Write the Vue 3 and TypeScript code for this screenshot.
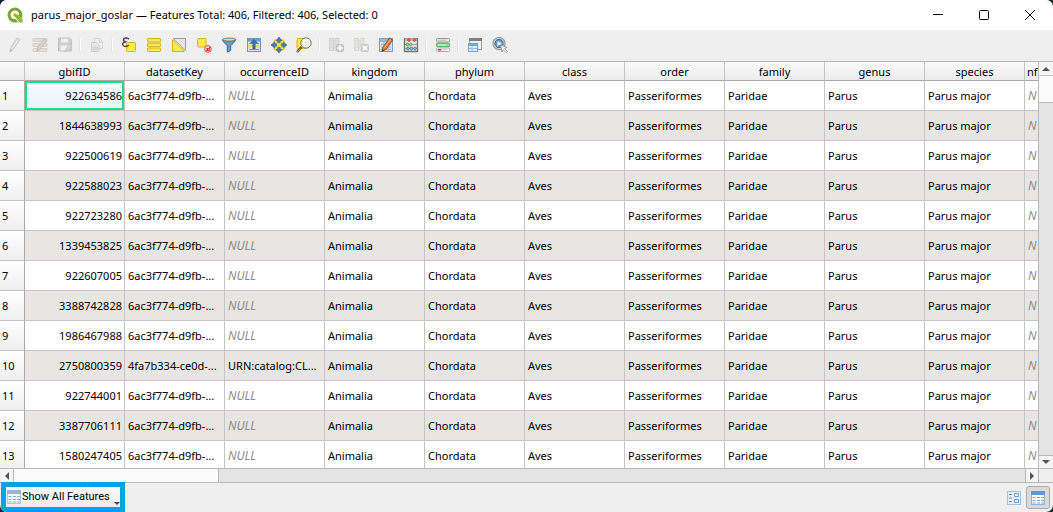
<script setup lang="ts">
import { ref } from 'vue'

interface Tool {
  name: string
  art: string
  disabled?: boolean
}

const yellow = 'fill="#fce94f" stroke="#d3b50e"'
const blue = 'fill="#6d97c4" stroke="#3f6a94"'

const groups: Tool[][] = [
  [
    {
      name: 'Toggle editing mode', disabled: true,
      art: '<path d="M3 15l1-4.500L10 1l3 1.500L6.500 12z" fill="#dddcd6" stroke="#c9c8c2"/><path d="M3 15l.6-2.500 1.500 1z" fill="#aaa"/><path d="M5.500 11L11 2.500" stroke="#f1f1ec"/>',
    },
    {
      name: 'Toggle multi edit mode', disabled: true,
      art: '<path d="M1 1.500h14v3H1zM1 6.500h14v3H1zM1 11.500h14v3H1z" fill="#e0dfd9" stroke="#d3d2cb"/><path d="M5 14l1-4 6-8 2.500 1.500L8 12z" fill="#d8d7d1" stroke="#bdbcb6"/>',
    },
    {
      name: 'Save edits', disabled: true,
      art: '<path d="M1.500 1h11l2 2v11h-13z" fill="#cfcfcc" stroke="#c0c0bd"/><path d="M4 1.500h7v4H4z" fill="#eee"/><path d="M3.500 8.500h8.500v5H3.500z" fill="#f0f0ee"/><path d="M8 15l1-3 4-5 2 1.500-4 5z" fill="#dddcd6" stroke="#c2c2bc"/>',
    },
  ],
  [
    {
      name: 'Copy rows', disabled: true,
      art: '<path d="M5.500 1.500h5l3 3v7h-8z" fill="#f0f0ee" stroke="#d0d0cd"/><path d="M2.500 5.500h5l2.500 2.500v6.500H2.500z" fill="#e8e8e5" stroke="#cececa"/><path d="M4 10h4.500v3H4zM10 3v2.500h3" fill="#d9d9d6" stroke="#cececa" stroke-width=".6"/>',
    },
  ],
  [
    {
      name: 'Select by expression',
      art: `<rect x="5.500" y="5.500" width="9" height="9" rx="1" ${yellow}/><path d="M8 2.200C6.500.2 2.300.8 2.500 3c.1 1.200 1.300 1.800 3 1.700C3 4.800 1.500 5.800 1.700 7.500 2.100 10 6 9.900 7.800 8" fill="none" stroke="#62376f" stroke-width="1.500"/>`,
    },
    {
      name: 'Select all',
      art: `<g ${yellow}><rect x="1.500" y="1.500" width="13" height="3.500" rx=".6"/><rect x="1.500" y="6.200" width="13" height="3.500" rx=".6"/><rect x="1.500" y="11" width="13" height="3.500" rx=".6"/></g>`,
    },
    {
      name: 'Invert selection',
      art: `<path d="M2.500 1.500h12v12z" fill="#e6e6e6" stroke="#9c9c9c"/><path d="M1.500 2.500v12h12z" ${yellow}/><path d="M1 1l14 14" stroke="#fff"/>`,
    },
    {
      name: 'Deselect all',
      art: `<rect x="1.500" y="1.500" width="8.500" height="8.500" rx="1" ${yellow}/><circle cx="12" cy="12" r="3.400" fill="#fbe3e3" stroke="#e05357"/><path d="M9.700 14.300l4.600-4.600M10.300 11.500h3.400v2h-3" stroke="#d9262b"/>`,
    },
    {
      name: 'Filter by form',
      art: `<path d="M1.500 2.500c0 2 3.500 5 4.800 6V15l3.400-1.500v-5c1.300-1 4.800-4 4.800-6z" ${blue}/><ellipse cx="8" cy="2.600" rx="6.500" ry="1.500" fill="#f4de6a" stroke="#4d7195" stroke-width=".9"/>`,
    },
    {
      name: 'Move selection to top',
      art: '<rect x="1.500" y="1.500" width="13" height="13" fill="#d7e5f2" stroke="#7096bd"/><path d="M2 2h12v2.500H2z" fill="#6f9bc8"/><path d="M2 8h12v2H2z" fill="#f0dc62"/><path d="M3 6.500h10M3 12.500h10" stroke="#739cc7"/><path d="M8 2.500l3.500 3.500H9.200v6H6.800V6H4.500z" fill="#416f9e" stroke="#345d87" stroke-width=".6"/>',
    },
    {
      name: 'Pan map to the selected rows',
      art: `<rect x="3" y="3" width="10" height="10" rx="1" ${yellow}/><path d="M8 0l3 3.700H9.200v2H6.800v-2H5zM8 16l3-3.700H9.200v-2H6.800v2H5zM0 8l3.700-3v1.800h2v2.400h-2V11zM16 8l-3.700-3v1.800h-2v2.400h2V11z" fill="#4e7eae" stroke="#315a84" stroke-width=".6"/>`,
    },
    {
      name: 'Zoom map to the selected rows',
      art: `<rect x="1" y="1.500" width="9" height="10" rx="1" ${yellow}/><path d="M1 15l4.500-5" stroke="#594c31" stroke-width="2.500"/><path d="M1.200 14.800l3-3.300" stroke="#e0b43d"/><circle cx="10" cy="6" r="5.200" fill="#eeeeea" fill-opacity=".95" stroke="#777"/><path d="M6.800 5.500Q8 2.500 11 2.800" fill="none" stroke="#fff" stroke-width="1.400"/>`,
    },
  ],
  [
    {
      name: 'New field', disabled: true,
      art: '<path d="M1.500 1.500h4v12h-4zM7 1.500h4v12H7z" fill="#e2e2dc" stroke="#d3d3cd"/><path d="M2 4h8.500M2 7h8.500M2 10h8.500" stroke="#d6d6d0"/><rect x="8.500" y="7.500" width="7" height="7" rx="1" fill="#cfcfc9" stroke="#c4c4be"/><path d="M12 8.500v5M9.500 11h5" stroke="#fff" stroke-width="1.500"/>',
    },
    {
      name: 'Delete field', disabled: true,
      art: '<path d="M1.500 1.500h4v12h-4zM7 1.500h4v12H7z" fill="#e6e6e4" stroke="#d6d6d3"/><path d="M2 4h8.500M2 7h8.500M2 10h8.500" stroke="#dadad7"/><rect x="8.500" y="7.500" width="7" height="7" rx="1" fill="#d6d2d2" stroke="#ccc8c8"/><path d="M10 9l4 4m0-4l-4 4" stroke="#fff" stroke-width="1.300"/>',
    },
    {
      name: 'Organize columns',
      art: '<rect x="1.500" y="1.500" width="13" height="13" fill="#d3e4f5" stroke="#78a0cb"/><path d="M2 2h12v3H2z" fill="#93b8df"/><path d="M3 7.500h10M3 10h10M3 12.500h10M6 5v9M10 5v9" stroke="#8eb2d7" stroke-width=".9"/><path d="M4 14.500l.8-4.200L11.500 1l3.200 2.100L8 12.400z" fill="#e07936" stroke="#8e431a" stroke-width=".8"/><path d="M6 11L12.800 2.300" stroke="#f7b276"/><path d="M4 14.500l.4-2.300 1.700 1.200z" fill="#423325"/>',
    },
    {
      name: 'Open field calculator',
      art: '<rect x="1.500" y="1.500" width="13" height="13" fill="#e5e5e2" stroke="#a5a59f"/><path d="M2 3h12M2 7.500h12M2 11.500h12" stroke="#999"/><g stroke-width=".7"><g fill="#f47a7a" stroke="#cf2b2b"><circle cx="6" cy="3" r="1.400"/><circle cx="11.500" cy="3" r="1.400"/></g><g fill="#8ed592" stroke="#46a04b"><circle cx="4.500" cy="7.500" r="1.400"/><circle cx="7.500" cy="7.500" r="1.400"/></g><g fill="#86b3dc" stroke="#42759f"><circle cx="5" cy="11.500" r="1.400"/><circle cx="8.500" cy="11.500" r="1.400"/><circle cx="12" cy="11.500" r="1.400"/></g></g><path d="M1.500 1v14M14.500 1v14M1 14.500h14" stroke="#77776f" stroke-width="1.300"/>',
    },
  ],
  [
    {
      name: 'Conditional formatting',
      art: '<rect x="1.500" y="1.500" width="13" height="3.500" rx="1" fill="#e9e9e9" stroke="#999"/><rect x="1.500" y="6.200" width="13" height="3.500" rx="1" fill="#8be29b" stroke="#50a65e"/><rect x="1.500" y="11" width="13" height="3.500" rx="1" fill="#fff" stroke="#aaa"/><path d="M3 3.200h8" stroke="#bbb"/><path d="M3 8h8" stroke="#d6f8da"/><path d="M3 12.800h3" stroke="#cc2432" stroke-width="1.500"/><path d="M6 12.800h6" stroke="#f0a3a8"/>',
    },
  ],
  [
    {
      name: 'Dock attribute table',
      art: '<rect x="2.500" y="1.500" width="12" height="11" fill="#eee" stroke="#a1a1a1"/><path d="M2 1h13v3H2z" fill="#808080"/><rect x="1.500" y="6.500" width="9" height="8" fill="#e1edfa" stroke="#7ba2cc"/><path d="M2 7h8v2H2z" fill="#76a3d3"/><path d="M2 11.500h8M5 9v5" stroke="#98bbdf"/>',
    },
    {
      name: 'Actions',
      art: '<circle cx="7" cy="6.500" r="6" fill="#e8ebee" stroke="#8f989f" stroke-width="1.200"/><circle cx="7" cy="6.500" r="4.200" fill="#6b98c4" stroke="#346491"/><path d="M5.500 4v5L10 6.500z" fill="#fff"/><path d="M8.500 8l6.500 2.500-2.500 1 3 3-1.200 1.200-3-3-1.200 2.300z" fill="#fff" stroke="#888" stroke-width=".8"/>',
    },
  ],
]

const columns = ['gbifID', 'datasetKey', 'occurrenceID', 'kingdom', 'phylum', 'class', 'order', 'family', 'genus', 'species']
const taxonomy = ['Animalia', 'Chordata', 'Aves', 'Passeriformes', 'Paridae', 'Parus', 'Parus major']

const ids = [
  '922634586', '1844638993', '922500619', '922588023', '922723280', '1339453825', '922607005',
  '3388742828', '1986467988', '2750800359', '922744001', '3387706111', '1580247405',
]
const rows = ids.map((id) => {
  const catalogued = id === '2750800359'
  return {
    id,
    cells: [
      catalogued ? '4fa7b334-ce0d-...' : '6ac3f774-d9fb-...',
      catalogued ? 'URN:catalog:CL...' : 'NULL',
      ...taxonomy,
      'N',
    ],
  }
})

const current = ref('922634586')
const view = ref<'form' | 'table'>('table')
</script>

<template>
  <div class="window">
    <header class="titlebar">
      <svg class="logo" viewBox="0 0 16 16" aria-hidden="true">
        <path d="M8 .5a7.500 7.500 0 1 0 3 14.400L8.700 12A4.300 4.300 0 1 1 12 8.800l2.600 2.500A7.500 7.500 0 0 0 8 .5z" fill="#76a832" />
        <path d="M9 8h2.700l4 4.500v3h-3.200L9 11z" fill="#8dbb3c" />
        <path d="M6.500 6.500h2.500L10.800 8.500 8.500 10.500 6.500 8.700z" fill="#ee8a2e" />
      </svg>
      <h1>parus_major_goslar — Features Total: 406, Filtered: 406, Selected: 0</h1>
      <div class="controls">
        <button type="button" aria-label="Minimize"><svg viewBox="0 0 12 12"><path d="M1 5.500h10" /></svg></button>
        <button type="button" aria-label="Maximize"><svg viewBox="0 0 12 12"><rect x="1.500" y="1.500" width="9" height="9" rx="1" /></svg></button>
        <button type="button" aria-label="Close"><svg viewBox="0 0 12 12"><path d="M1 1l10 10M11 1L1 11" /></svg></button>
      </div>
    </header>

    <div class="toolbar" role="toolbar" aria-label="Attribute table">
      <div v-for="(group, g) in groups" :key="g" class="group">
        <button v-for="tool in group" :key="tool.name" type="button" :aria-label="tool.name" :disabled="tool.disabled">
          <svg viewBox="0 0 16 16" fill="none" v-html="tool.art" />
        </button>
      </div>
    </div>

    <main class="grid">
      <div class="viewport">
        <table>
          <colgroup>
            <col class="col-number" />
            <col v-for="n in columns.length + 1" :key="n" class="col-data" />
          </colgroup>
          <thead>
            <tr>
              <th></th>
              <th v-for="name in columns" :key="name" scope="col">{{ name }}</th>
              <th scope="col" class="clipped">nf</th>
            </tr>
          </thead>
          <tbody>
            <tr v-for="(row, r) in rows" :key="row.id">
              <th scope="row">{{ r + 1 }}</th>
              <td class="number" :class="{ current: row.id === current }" @click="current = row.id">{{ row.id }}</td>
              <td v-for="(cell, c) in row.cells" :key="c" :class="{ missing: cell === 'NULL' || cell === 'N' }">{{ cell }}</td>
            </tr>
          </tbody>
        </table>
      </div>
      <div class="scroll vertical">
        <button type="button" aria-label="Scroll up"><svg viewBox="0 0 8 8"><path d="M0 6l4-4 4 4z" /></svg></button>
        <div class="track"><div class="thumb"></div></div>
        <button type="button" aria-label="Scroll down"><svg viewBox="0 0 8 8"><path d="M0 2l4 4 4-4z" /></svg></button>
      </div>
      <div class="scroll horizontal">
        <button type="button" aria-label="Scroll left"><svg viewBox="0 0 8 8"><path d="M6 0L2 4l4 4z" /></svg></button>
        <div class="track"><div class="thumb"></div></div>
        <button type="button" aria-label="Scroll right"><svg viewBox="0 0 8 8"><path d="M2 0l4 4-4 4z" /></svg></button>
      </div>
      <div class="corner"></div>
    </main>

    <footer class="statusbar">
      <button type="button" class="filter" aria-haspopup="menu">
        <svg class="icon" viewBox="0 0 16 16" aria-hidden="true">
          <rect x="1.500" y="1.500" width="13" height="13" fill="#f5f9fd" stroke="#adc5dd" />
          <path d="M1 1h14v4H1z" fill="#91b6dc" />
          <path d="M2.500 7.500h3M7 7.500h3M11 7.500h3M2.500 10.500h3M7 10.500h3M11 10.500h3M2.500 13h3M7 13h3M11 13h3" stroke="#87aad0" />
        </svg>
        <span>Show All Features</span>
        <svg class="caret" viewBox="0 0 6 4" aria-hidden="true"><path d="M0 0h6L3 3z" fill="#444" /></svg>
      </button>
      <div class="views">
        <button type="button" aria-label="Form view" :class="{ active: view === 'form' }" @click="view = 'form'">
          <svg class="icon" viewBox="0 0 16 16">
            <rect x="1.500" y="1.500" width="13" height="13" fill="#e4eefa" stroke="#a6c0dc" />
            <path d="M3 4.500h3M3 8h3M3 11.500h3" stroke="#7b8da3" />
            <path d="M8.500 3.500h4v3h-4zM8.500 9.500h4v3h-4z" fill="#fff" stroke="#759ac3" />
          </svg>
        </button>
        <button type="button" aria-label="Table view" :class="{ active: view === 'table' }" @click="view = 'table'">
          <svg class="icon" viewBox="0 0 16 16">
            <rect x="1.500" y="1.500" width="13" height="13" fill="#f5f9fd" stroke="#8fb1d6" />
            <path d="M1 1h14v4H1z" fill="#6796cb" />
            <path d="M2.500 7.500h3M7 7.500h3M11 7.500h3M2.500 10.500h3M7 10.500h3M11 10.500h3M2.500 13h3M7 13h3M11 13h3" stroke="#7fa6d1" />
          </svg>
        </button>
      </div>
    </footer>
  </div>
</template>

<style>
body {
  background: #10242f;
}
</style>

<style scoped>
.window {
  display: flex;
  flex-direction: column;
  height: 100vh;
  overflow: hidden;
  border-radius: 7px;
  background: #efefef;
  color: #000;
  font: 11px/14px "Noto Sans", "Open Sans", sans-serif;
}

button {
  display: flex;
  align-items: center;
  justify-content: center;
  margin: 0;
  padding: 0;
  border: 0;
  background: none;
  color: inherit;
  font: inherit;
}

.titlebar {
  display: flex;
  flex: none;
  align-items: center;
  height: 30px;
  padding-left: 7px;
  background: #fff;
}

.logo {
  width: 16px;
  height: 16px;
}

h1 {
  flex: 1;
  margin: 0 0 0 8px;
  font-size: 11px;
  font-weight: 400;
  white-space: nowrap;
}

.controls {
  display: flex;
}

.controls button {
  width: 46px;
  height: 28px;
}

.controls svg {
  width: 12px;
  height: 12px;
  fill: none;
  stroke: #000;
}

.toolbar {
  display: flex;
  box-sizing: border-box;
  flex: none;
  align-items: center;
  height: 32px;
  padding: 0 0 1px 2px;
  border-bottom: 1px solid #b4b4b4;
}

.group {
  display: flex;
}

.group + .group::before {
  content: "";
  align-self: center;
  width: 1px;
  height: 12px;
  margin: 0 3px;
  background: #fff;
  box-shadow: -1px 0 #e2e2e2;
}

.group button {
  width: 25px;
  height: 24px;
}

.group svg {
  width: 16px;
  height: 16px;
}

.grid {
  display: grid;
  flex: 1;
  grid-template-columns: minmax(0, 1fr) 15px;
  grid-template-rows: minmax(0, 1fr) 15px;
  min-height: 0;
}

.viewport {
  overflow: hidden;
  background: #fff;
}

table {
  width: 1125px;
  border-collapse: separate;
  border-spacing: 0;
  table-layout: fixed;
}

.col-number {
  width: 25px;
}

.col-data {
  width: 100px;
}

th,
td {
  box-sizing: border-box;
  overflow: hidden;
  border-right: 1px solid #c4c4c4;
  border-bottom: 1px solid #c4c4c4;
  font-weight: 400;
  white-space: nowrap;
}

thead th {
  height: 19px;
  padding: 2px 0 0;
  border-bottom-color: #a8a8a8;
  background: linear-gradient(#fafafa, #ececec);
  text-align: center;
}

thead .clipped {
  padding-left: 2px;
  text-align: left;
}

tbody th {
  height: 30px;
  padding: 1px 0 0 2px;
  border-right-color: #a8a8a8;
  background: linear-gradient(#fff, #efefef);
  text-align: left;
}

td {
  height: 30px;
  padding: 0 3px;
}

tbody tr:nth-child(even) td {
  background: #e8e6e2;
}

.number {
  padding-right: 2px;
  text-align: right;
}

tbody td.current {
  background: linear-gradient(#f8fcff, #e6f3fd);
  box-shadow: inset 0 0 0 2px #12e57f;
}

.missing {
  color: #8c8c8c;
  font-size: 12px;
  font-style: italic;
}

.scroll {
  display: flex;
  background: #e4e4e4;
}

.scroll button {
  flex: none;
  background: #f5f5f5;
}

.scroll svg {
  width: 8px;
  height: 8px;
  fill: #555;
}

.track {
  flex: 1;
}

.thumb {
  box-sizing: border-box;
  background: #fbfbfb;
}

.vertical {
  flex-direction: column;
  border-left: 1px solid #b8b8b8;
}

.vertical button {
  height: 13px;
}

.vertical .thumb {
  height: 28px;
  border-top: 1px solid #c4c4c4;
  border-bottom: 1px solid #b8b8b8;
}

.vertical button:last-child {
  border-top: 1px solid #b8b8b8;
}

.horizontal,
.corner {
  border-top: 1px solid #b8b8b8;
  border-bottom: 1px solid #b8b8b8;
}

.corner {
  border-left: 1px solid #b8b8b8;
}

.horizontal button {
  width: 13px;
}

.horizontal .thumb {
  width: 206px;
  height: 100%;
  border-right: 1px solid #b8b8b8;
  border-left: 1px solid #b8b8b8;
}

.horizontal button:last-child {
  border-left: 1px solid #b8b8b8;
}

.statusbar {
  display: flex;
  flex: none;
  justify-content: space-between;
  height: 29px;
  padding: 0 3px 0 1px;
}

.icon {
  width: 16px;
  height: 16px;
}

.filter {
  box-sizing: border-box;
  width: 124px;
  height: 30px;
  margin-top: -1px;
  justify-content: flex-start;
  border: 5px solid #00a2e8;
  background: linear-gradient(#fafafa, #ececec);
  font-family: Roboto, "Noto Sans", sans-serif;
  white-space: nowrap;
}

.caret {
  align-self: flex-end;
  width: 6px;
  height: 4px;
  margin: 0 0 1px auto;
}

.views {
  display: flex;
  align-items: center;
}

.views button {
  box-sizing: border-box;
  width: 24px;
  height: 23px;
  border: 1px solid transparent;
  border-radius: 3px;
}

.views .active {
  border-color: #acacac;
  background: #dadada;
}
</style>
